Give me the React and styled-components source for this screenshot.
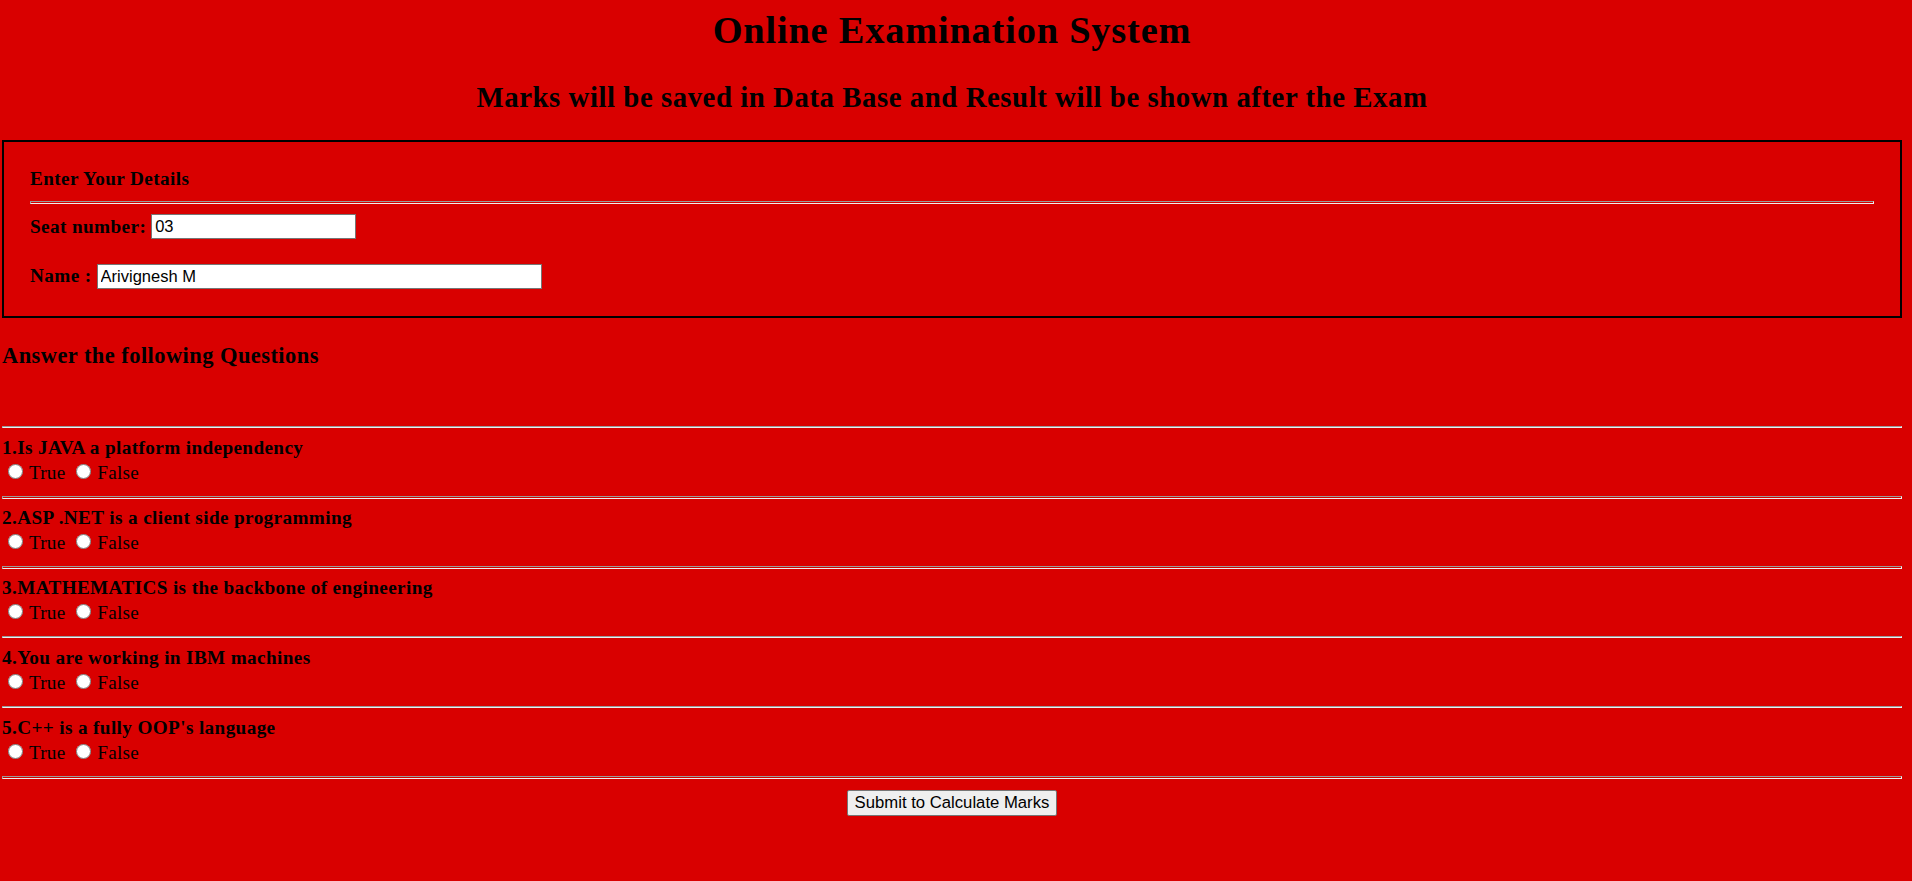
import React from 'react';
import styled, { createGlobalStyle } from 'styled-components';

const questions = [
  { id: 1, text: '1.Is JAVA a platform independency', gap: false },
  { id: 2, text: '2.ASP .NET is a client side programming', gap: true },
  { id: 3, text: '3.MATHEMATICS is the backbone of engineering', gap: true },
  { id: 4, text: '4.You are working in IBM machines', gap: false },
  { id: 5, text: "5.C++ is a fully OOP's language", gap: false },
];

const App = () => {
  return (
    <>
      <GlobalStyle />
      <Page>
        <Title>Online Examination System</Title>
        <Subtitle>Marks will be saved in Data Base and Result will be shown after the Exam</Subtitle>

        <DetailsBox>
          <BoxHeading>Enter Your Details</BoxHeading>
          <Rule $gap $top={11.5} $bottom={11} />
          <FieldRow>
            <FieldLabel htmlFor="seat">Seat number:</FieldLabel>
            <TextInput id="seat" defaultValue="03" $width={205} />
          </FieldRow>
          <FieldRow $top={24.5}>
            <FieldLabel htmlFor="name">Name :</FieldLabel>
            <TextInput id="name" defaultValue="Arivignesh M" $width={445} />
          </FieldRow>
        </DetailsBox>

        <SectionHeading>Answer the following Questions</SectionHeading>

        <QuestionList>
          {questions.map((q) => (
            <Question key={q.id}>
              <Rule $gap={q.gap} />
              <QuestionText>{q.text}</QuestionText>
              <Options>
                <Radio type="radio" name={`q${q.id}`} value="true" />
                True{' '}
                <Radio type="radio" name={`q${q.id}`} value="false" />
                False
              </Options>
            </Question>
          ))}
          <Rule $gap />
        </QuestionList>

        <SubmitRow>
          <SubmitButton type="button">Submit to Calculate Marks</SubmitButton>
        </SubmitRow>
      </Page>
    </>
  );
};

const GlobalStyle = createGlobalStyle`
  html, body {
    margin: 0;
    background: #d90000;
  }
  body {
    font-family: "Liberation Serif", "Times New Roman", serif;
    color: #000;
  }
`;

const Page = styled.div`
  padding: 0 10px 40px 2px;
  min-height: 881px;
  box-sizing: border-box;
  font-size: 19.2px;
  line-height: 22px;
`;

const Title = styled.h1`
  margin: 8px 0 0;
  font-size: 38.4px;
  line-height: 44px;
  font-weight: bold;
  letter-spacing: 0.8px;
  text-align: center;
`;

const Subtitle = styled.h2`
  margin: 28.5px 0 0;
  font-size: 28.8px;
  line-height: 33px;
  font-weight: bold;
  letter-spacing: 0.55px;
  text-align: center;
`;

const DetailsBox = styled.fieldset`
  margin: 26.5px 0 0;
  padding: 25.5px 26px 27.5px;
  border: 2px solid #000;
  min-width: 0;
`;

const BoxHeading = styled.div`
  font-weight: bold;
  font-size: 19.2px;
  line-height: 22px;
  letter-spacing: 0.4px;
`;

const Rule = styled.hr`
  margin: ${({ $top = 0 }) => $top}px 0 ${({ $gap, $bottom = 0 }) => $bottom - ($gap ? 1 : 0)}px;
  height: ${({ $gap }) => ($gap ? 1 : 0)}px;
  box-sizing: content-box;
  border-style: solid;
  border-width: 1px;
  border-color: #9a9a9a #eeeeee #eeeeee #9a9a9a;
`;

const FieldRow = styled.div`
  display: flex;
  align-items: center;
  gap: 5px;
  height: 25px;
  margin-top: ${({ $top = 0 }) => $top}px;
`;

const FieldLabel = styled.label`
  font-weight: bold;
  font-size: 19.2px;
  line-height: 22px;
  letter-spacing: 0.4px;
`;

const TextInput = styled.input`
  width: ${({ $width }) => $width}px;
  height: 25px;
  box-sizing: border-box;
  margin: 0;
  padding: 0 3px;
  border: 1px solid #767676;
  background: #fff;
  font-family: "Liberation Sans", Arial, sans-serif;
  font-size: 16.5px;
  color: #000;
`;

const SectionHeading = styled.h3`
  margin: 24.5px 0 0;
  font-size: 22.46px;
  line-height: 26px;
  font-weight: bold;
  letter-spacing: 0.45px;
`;

const QuestionList = styled.div`
  margin-top: 57px;
`;

const Question = styled.div`
  padding-bottom: 11.5px;
`;

const QuestionText = styled.div`
  margin-top: 9.5px;
  font-weight: bold;
  font-size: 19.2px;
  line-height: 22px;
  letter-spacing: 0.38px;
`;

const Options = styled.div`
  margin-top: 3px;
  font-size: 19.2px;
  line-height: 22px;
  letter-spacing: 0.2px;
`;

const Radio = styled.input`
  width: 15px;
  height: 15px;
  margin: 0 6px 0 6px;
  vertical-align: baseline;
`;

const SubmitRow = styled.div`
  margin-top: 12px;
  text-align: center;
`;

const SubmitButton = styled.button`
  height: 26px;
  padding: 0 7px;
  border: 1px solid #767676;
  border-radius: 2px;
  background: #efefef;
  font-family: "Liberation Sans", Arial, sans-serif;
  font-size: 16.7px;
  color: #000;
`;

export default App;
